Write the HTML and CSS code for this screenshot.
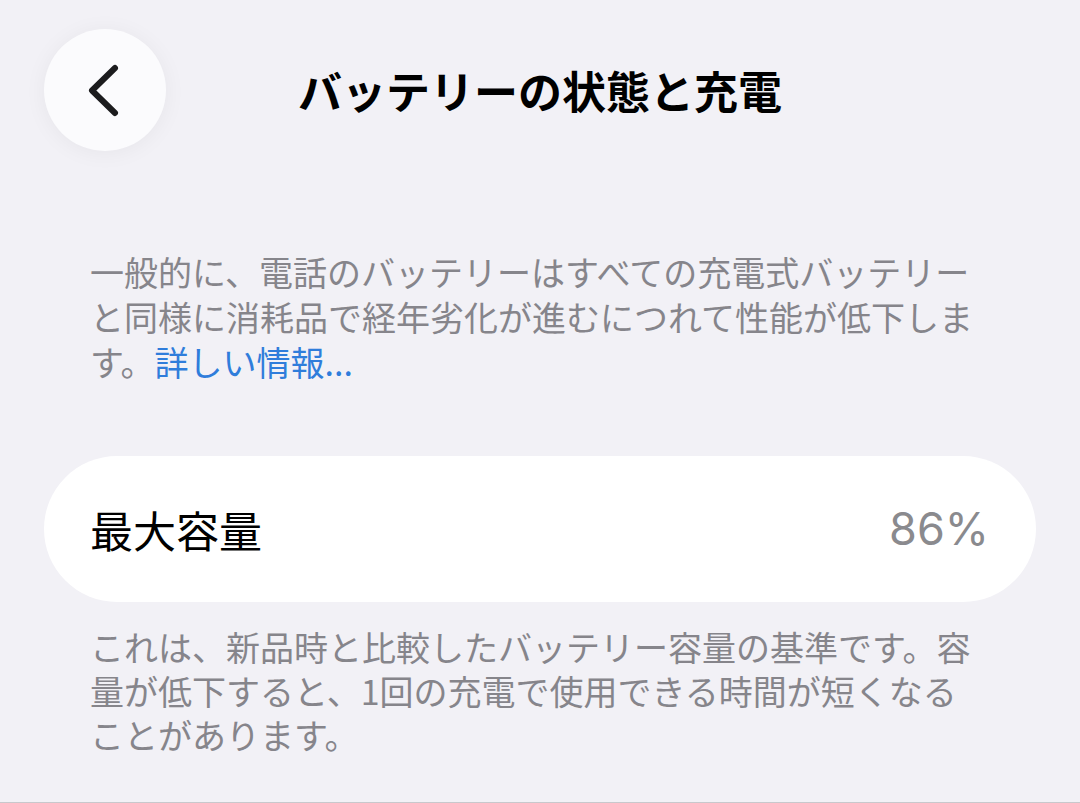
FILE: index.html
```html
<!DOCTYPE html>
<html lang="ja">
<head>
<meta charset="utf-8">
<title>バッテリーの状態と充電</title>
<link rel="stylesheet" href="styles.css">
</head>
<body>
<div class="page">
  <header class="nav">
    <button class="back" aria-label="戻る">
      <svg viewBox="0 0 40 60" width="40" height="60" aria-hidden="true">
        <path d="M31 8 L8 30.5 L31 53" fill="none" stroke="#1c1c1e" stroke-width="6" stroke-linecap="round" stroke-linejoin="round"/>
      </svg>
    </button>
    <h1 class="title">バッテリーの状態と充電</h1>
    <span class="spacer"></span>
  </header>

  <p class="note note-top">一般的に、電話のバッテリーはすべての充電式バッテリーと同様に消耗品で経年劣化が進むにつれて性能が低下します。<a class="link" href="#">詳しい情報...</a></p>

  <div class="card">
    <span class="label">最大容量</span>
    <span class="value">86%</span>
  </div>

  <p class="note note-bottom">これは、新品時と比較したバッテリー容量の基準です。容量が低下すると、1回の充電で使用できる時間が短くなることがあります。</p>
</div>
</body>
</html>
```

FILE: styles.css
```css
html, body {
  margin: 0;
  padding: 0;
  background: #f2f1f6;
}

body {
  font-family: "Noto Sans CJK JP", "Noto Sans", sans-serif;
  color: #000;
}

.page {
  height: 802px;
  border-bottom: 1px solid #c8c8cc;
  overflow: hidden;
}

.nav {
  display: grid;
  grid-template-columns: 122px 1fr 122px;
  align-items: center;
  padding: 29px 44px 0 44px;
  height: 122px;
}

.back {
  width: 122px;
  height: 122px;
  border-radius: 50%;
  border: none;
  padding: 0;
  background: #fbfbfd;
  box-shadow: 0 2px 22px rgba(0, 0, 0, 0.05);
  display: flex;
  align-items: center;
  justify-content: center;
}

.back svg {
  display: block;
  margin-right: 2px;
}

.title {
  margin: 0;
  text-align: center;
  font-size: 44px;
  font-weight: 700;
  line-height: 60px;
  letter-spacing: 0;
}

.note {
  margin: 0;
  padding-left: 90px;
  width: 900px;
  font-size: 34px;
  color: #86858b;
}

.note-top {
  margin-top: 98px;
  line-height: 45px;
}

.link {
  display: inline-block;
  line-height: 45px;
  vertical-align: top;
  color: #2f7ddb;
  text-decoration: none;
}

.card {
  margin: 72px 44px 0 44px;
  height: 146px;
  border-radius: 73px;
  background: #ffffff;
  display: flex;
  align-items: center;
  justify-content: space-between;
  padding: 0 47px 0 46px;
  box-sizing: border-box;
}

.label {
  font-size: 43px;
  line-height: 60px;
  color: #000;
}

.value {
  font-family: Inter, "Liberation Sans", sans-serif;
  font-size: 45px;
  line-height: 60px;
  color: #8a8a8e;
}

.note-bottom {
  margin-top: 23px;
  line-height: 44px;
}
```
